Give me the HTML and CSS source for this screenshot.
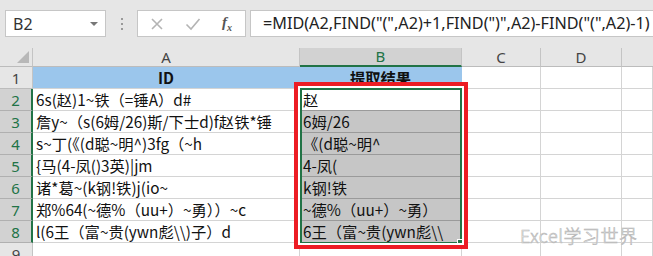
FILE: index.html
```html
<!DOCTYPE html>
<html lang="zh">
<head>
  <meta charset="UTF-8" />
  <title>提取结果</title>
  <link rel="stylesheet" href="styles.css">
</head>
<body>
  <div class="toolbar">
    <div class="namebox">
      <span>B2</span>
      <span class="caret"></span>
    </div>
    <div class="grip"><i></i><i></i><i></i></div>
    <div class="fx-buttons">
      <svg class="btn" width="14" height="14" viewBox="0 0 14 14"><path d="M2 2 L12 12 M12 2 L2 12" stroke="#b4b4b4" stroke-width="1.6" fill="none"/></svg>
      <svg class="btn" width="16" height="14" viewBox="0 0 16 14"><path d="M1.5 7.5 L6 12 L14.5 2" stroke="#b4b4b4" stroke-width="1.6" fill="none"/></svg>
      <span class="fx">f<sub>x</sub></span>
    </div>
    <div class="formula">=MID(A2,FIND("(",A2)+1,FIND(")",A2)-FIND("(",A2)-1)</div>
  </div>

  <div class="sheet">
    <div class="hd corner"><span class="tri"></span></div>
    <div class="hd col">A</div>
    <div class="hd col on">B</div>
    <div class="hd col">C</div>
    <div class="hd col">D</div>
    <div class="hd col last"></div>

    <div class="hd row">1</div>
    <div class="cell fill title">ID</div>
    <div class="cell fill title">提取结果</div>
    <div class="cell"></div><div class="cell"></div><div class="cell"></div>

    <div class="hd row on">2</div>
    <div class="cell">6s(赵)1~铁（=锤A）d#</div>
    <div class="cell active">赵</div>
    <div class="cell"></div><div class="cell"></div><div class="cell"></div>

    <div class="hd row on">3</div>
    <div class="cell">詹y~（s(6姆/26)斯/下士d)f赵铁*锤</div>
    <div class="cell sel">6姆/26</div>
    <div class="cell"></div><div class="cell"></div><div class="cell"></div>

    <div class="hd row on">4</div>
    <div class="cell">s~丁(《(d聪~明^)3fg（~h</div>
    <div class="cell sel">《(d聪~明^</div>
    <div class="cell"></div><div class="cell"></div><div class="cell"></div>

    <div class="hd row on">5</div>
    <div class="cell">{马(4-凤()3英)|jm</div>
    <div class="cell sel">4-凤(</div>
    <div class="cell"></div><div class="cell"></div><div class="cell"></div>

    <div class="hd row on">6</div>
    <div class="cell">诸*葛~(k钢!铁)j(io~</div>
    <div class="cell sel">k钢!铁</div>
    <div class="cell"></div><div class="cell"></div><div class="cell"></div>

    <div class="hd row on">7</div>
    <div class="cell">郑%64(~德%（uu+）~勇））~c</div>
    <div class="cell sel">~德%（uu+）~勇）</div>
    <div class="cell"></div><div class="cell"></div><div class="cell"></div>

    <div class="hd row on">8</div>
    <div class="cell">l(6王（富~贵(ywn彪\\)子）d</div>
    <div class="cell sel">6王（富~贵(ywn彪\\</div>
    <div class="cell"></div><div class="cell"></div><div class="cell"></div>

    <div class="hd row">9</div>
    <div class="cell"></div><div class="cell"></div>
    <div class="cell"></div><div class="cell"></div><div class="cell"></div>

    <div class="selection"><span class="handle"></span></div>
    <div class="redbox"></div>
    <div class="watermark">Excel学习世界</div>
  </div>
</body>
</html>
```

FILE: styles.css
```css
body {
  margin: 0;
  background: #fff;
  font-family: "Noto Sans CJK SC", "Noto Sans", sans-serif;
  color: #222;
  overflow: hidden;
  height: 256px;
}

.toolbar {
  display: flex;
  align-items: stretch;
  height: 48px;
  padding-top: 10px;
  box-sizing: border-box;
  background: #e6e6e6;
  padding-left: 5px;
  padding-bottom: 11px;
}

.namebox {
  width: 101px;
  background: #fff;
  border: 1px solid #c6c6c6;
  box-sizing: border-box;
  display: flex;
  align-items: center;
  justify-content: space-between;
  padding: 0 7px 0 7px;
  font-family: "Noto Sans", sans-serif;
  font-size: 16px;
  color: #333;
}

.caret {
  width: 0;
  height: 0;
  border-left: 4px solid transparent;
  border-right: 4px solid transparent;
  border-top: 4px solid #777;
}

.grip {
  width: 31px;
  display: flex;
  flex-direction: column;
  align-items: center;
  justify-content: center;
  gap: 3px;
}

.grip i {
  width: 2px;
  height: 2px;
  background: #999;
}

.fx-buttons {
  width: 109px;
  background: #fff;
  border: 1px solid #c6c6c6;
  box-sizing: border-box;
  display: flex;
  align-items: center;
  padding-left: 12px;
  gap: 21px;
}

.fx {
  font-family: "Liberation Serif", serif;
  font-style: italic;
  font-weight: bold;
  font-size: 15px;
  color: #555;
}

.fx sub {
  font-size: 10px;
}

.formula {
  flex: 1;
  margin-left: 4px;
  margin-right: -4px;
  background: #fff;
  border: 1px solid #c6c6c6;
  box-sizing: border-box;
  padding-left: 12px;
  font-family: "Noto Sans", sans-serif;
  font-size: 16.2px;
  line-height: 25px;
  color: #222;
  white-space: nowrap;
}

.sheet {
  position: relative;
  display: grid;
  grid-template-columns: 33px 267px 162px 79px 81px 1fr;
  grid-template-rows: 19px repeat(9, 22px);
}

.hd {
  background: #e6e6e6;
  box-sizing: border-box;
  border-right: 1px solid #c4c4c4;
  border-bottom: 1px solid #bcbcbc;
  color: #444;
  font-family: "Noto Sans", sans-serif;
  font-size: 15px;
  display: flex;
  align-items: center;
  justify-content: center;
}

.hd.col {
  line-height: 19px;
}

.hd.col.on {
  background: #d2d2d2;
  color: #217346;
  border-bottom: 2px solid #217346;
}

.hd.col.last {
  border-right: none;
}

.corner {
  position: relative;
}

.tri {
  position: absolute;
  right: 3px;
  bottom: 3px;
  width: 0;
  height: 0;
  border-left: 12px solid transparent;
  border-bottom: 12px solid #b8b8b8;
}

.hd.row.on {
  background: #d2d2d2;
  color: #217346;
  border-right: 2px solid #217346;
  border-bottom-color: #b0b0b0;
}

.cell {
  box-sizing: border-box;
  border-right: 1px solid #d4d4d4;
  border-bottom: 1px solid #d4d4d4;
  font-size: 15.3px;
  line-height: 21px;
  padding-left: 3px;
  white-space: nowrap;
  overflow: hidden;
  color: #111;
}

.cell.fill {
  background: #9bc6ec;
  border-right-color: #9bc6ec;
  border-bottom-color: #d4d4d4;
}

.cell.title {
  font-weight: bold;
  text-align: center;
  padding-left: 0;
}

.cell.active {
  border-bottom-color: #9a9a9a;
}

.cell.sel {
  background: #c6c6c6;
  border-bottom-color: #9a9a9a;
}

.selection {
  position: absolute;
  left: 300px;
  top: 40px;
  width: 162px;
  height: 156px;
  box-sizing: border-box;
  border: 2px solid #217346;
}

.handle {
  position: absolute;
  right: -4px;
  bottom: -4px;
  width: 5px;
  height: 5px;
  background: #217346;
  border: 1px solid #fff;
}

.redbox {
  position: absolute;
  left: 294px;
  top: 34px;
  width: 174px;
  height: 167px;
  box-sizing: border-box;
  border: 4px solid #ec1c24;
  box-shadow: inset 0 0 0 2px #fff;
}

.watermark {
  position: absolute;
  left: 520px;
  top: 174px;
  font-family: "Noto Sans CJK SC", sans-serif;
  font-weight: 300;
  font-size: 18px;
  letter-spacing: 0.5px;
  color: #fff;
  -webkit-text-stroke: 0.6px #b4b4b4;
  white-space: nowrap;
}
```
